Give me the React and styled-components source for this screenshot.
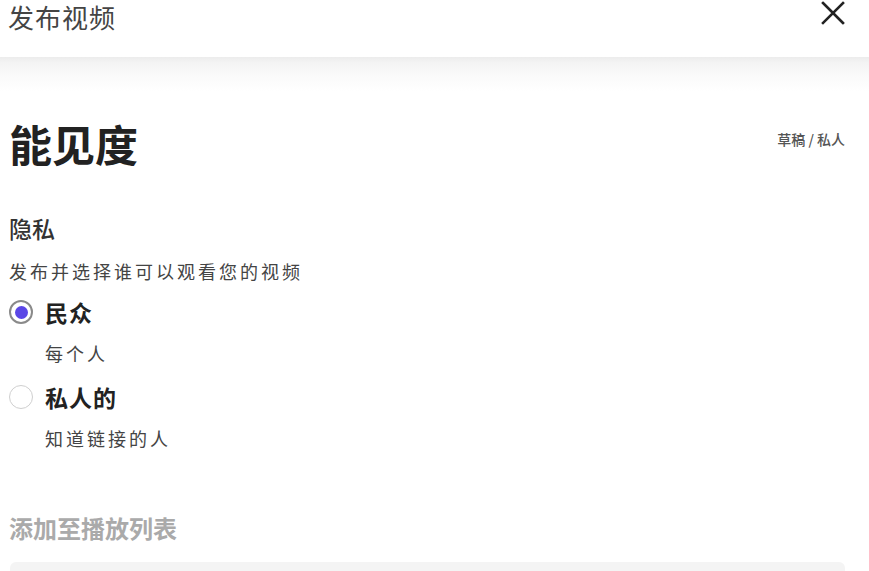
import React from "react";
import styled, { createGlobalStyle } from "styled-components";

const GlobalStyle = createGlobalStyle`
  html, body {
    margin: 0;
    padding: 0;
    background: #fff;
    overflow: hidden;
  }
  body {
    font-family: "Noto Sans CJK SC", "Noto Sans", sans-serif;
    color: #222;
  }
  * {
    box-sizing: border-box;
  }
`;

const options = [
  { id: "public", label: "民众", hint: "每个人", checked: true },
  { id: "private", label: "私人的", hint: "知道链接的人", checked: false },
];

export default function App() {
  return (
    <React.Fragment>
      <GlobalStyle />
      <Dialog>
        <Header>
          <HeaderTitle>发布视频</HeaderTitle>
          <CloseButton aria-label="关闭">
            <svg width="24" height="24" viewBox="0 0 24 24" fill="none">
              <path
                d="M2 2L22 22M22 2L2 22"
                stroke="#222"
                strokeWidth="2.6"
                strokeLinecap="square"
              />
            </svg>
          </CloseButton>
        </Header>
        <HeaderShade />
        <Body>
          <TitleRow>
            <Title>能见度</Title>
            <Crumb>草稿 / 私人</Crumb>
          </TitleRow>
          <Section>
            <SectionTitle>隐私</SectionTitle>
            <SectionDesc>发布并选择谁可以观看您的视频</SectionDesc>
            <OptionList>
              {options.map((o) => (
                <Option key={o.id}>
                  <OptionRow>
                    <Radio $checked={o.checked} />
                    <OptionLabel>{o.label}</OptionLabel>
                  </OptionRow>
                  <OptionHint>{o.hint}</OptionHint>
                </Option>
              ))}
            </OptionList>
          </Section>
          <Playlist>
            <PlaylistTitle>添加至播放列表</PlaylistTitle>
            <PlaylistBox />
          </Playlist>
        </Body>
      </Dialog>
    </React.Fragment>
  );
}

const Dialog = styled.div`
  width: 869px;
  height: 571px;
  overflow: hidden;
  background: #fff;
`;

const Header = styled.header`
  display: flex;
  justify-content: space-between;
  align-items: flex-start;
  height: 57px;
  padding: 0 23px 0 8px;
`;

const HeaderTitle = styled.h2`
  margin: 0;
  padding-top: 2px;
  font-size: 26px;
  line-height: 30px;
  font-weight: 400;
  letter-spacing: 1px;
  color: #444;
`;

const CloseButton = styled.button`
  display: flex;
  align-items: center;
  justify-content: center;
  width: 26px;
  height: 26px;
  padding: 0;
  border: none;
  background: transparent;
  cursor: pointer;
`;

const HeaderShade = styled.div`
  height: 34px;
  background: linear-gradient(#ececec 0, #f3f3f3 15%, #fafafa 55%, #fff 100%);
`;

const Body = styled.main`
  display: flex;
  flex-direction: column;
  padding: 18px 24px 0 9px;
`;

const TitleRow = styled.div`
  display: flex;
  justify-content: space-between;
  align-items: center;
  height: 68px;
`;

const Title = styled.h1`
  margin: 0;
  font-size: 43px;
  line-height: 56px;
  font-weight: 700;
  color: #222;
`;

const Crumb = styled.span`
  margin-bottom: 8px;
  font-size: 14px;
  font-weight: 500;
  color: #555;
`;

const Section = styled.section`
  display: flex;
  flex-direction: column;
  margin-top: 36px;
`;

const SectionTitle = styled.h3`
  margin: 0;
  font-size: 23px;
  line-height: 30px;
  font-weight: 500;
  color: #333;
`;

const SectionDesc = styled.p`
  margin: 16px 0 0;
  font-size: 18px;
  line-height: 24px;
  letter-spacing: 3px;
  color: #444;
`;

const OptionList = styled.div`
  display: flex;
  flex-direction: column;
  gap: 17px;
  margin-top: 14px;
`;

const Option = styled.label`
  display: flex;
  flex-direction: column;
  gap: 14px;
`;

const OptionRow = styled.div`
  display: flex;
  align-items: center;
  gap: 12px;
`;

const Radio = styled.span`
  position: relative;
  width: 24px;
  height: 24px;
  border-radius: 50%;
  border: ${(p) => (p.$checked ? "2px solid #8a8a8a" : "1.5px solid #cfcfcf")};
  background: #fff;

  &::after {
    content: "";
    display: ${(p) => (p.$checked ? "block" : "none")};
    position: absolute;
    left: 50%;
    top: 50%;
    width: 13px;
    height: 13px;
    margin: -6.5px 0 0 -6.5px;
    border-radius: 50%;
    background: #5b47e6;
  }
`;

const OptionLabel = styled.span`
  font-size: 23px;
  line-height: 30px;
  font-weight: 700;
  letter-spacing: 1px;
  color: #222;
`;

const OptionHint = styled.span`
  padding-left: 36px;
  font-size: 18px;
  line-height: 24px;
  letter-spacing: 3px;
  color: #444;
`;

const Playlist = styled.section`
  display: flex;
  flex-direction: column;
  margin-top: 62px;
`;

const PlaylistTitle = styled.h3`
  margin: 0;
  font-size: 24px;
  line-height: 32px;
  font-weight: 700;
  color: #aaa;
`;

const PlaylistBox = styled.div`
  height: 40px;
  margin-top: 18px;
  margin-left: 1px;
  border-radius: 6px;
  background: #f4f4f4;
`;
